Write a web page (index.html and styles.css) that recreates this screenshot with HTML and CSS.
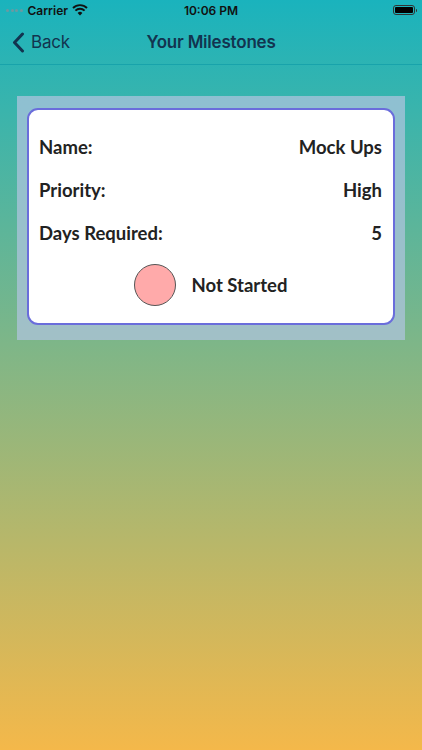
FILE: index.html
```html
<!DOCTYPE html>
<html lang="en">
<head>
    <meta charset="UTF-8">
    <title>Your Milestones</title>
    <link rel="stylesheet" href="styles.css">
</head>
<body>
    <div class="screen">
        <div class="status">
            <div class="status-left">
                <span class="dots"><i></i><i></i><i></i><i></i></span>
                <span class="carrier">Carrier</span>
                <svg class="wifi" width="16" height="12" viewBox="0 0 16 12">
                    <path d="M8 11.5 L5.6 8.9 A3.4 3.4 0 0 1 10.4 8.9 Z" fill="#111"/>
                    <path d="M3.4 6.6 A6.5 6.5 0 0 1 12.6 6.6" stroke="#111" stroke-width="1.9" fill="none"/>
                    <path d="M1 4 A10 10 0 0 1 15 4" stroke="#111" stroke-width="1.9" fill="none"/>
                </svg>
            </div>
            <div class="time">10:06 PM</div>
            <div class="battery"><span></span></div>
        </div>
        <div class="nav">
            <a href="#" class="back">
                <svg width="13" height="21" viewBox="0 0 13 21">
                    <path d="M10.5 2 L2.5 10.5 L10.5 19" stroke="#12344f" stroke-width="3" fill="none" stroke-linecap="round" stroke-linejoin="round"/>
                </svg>
                <span>Back</span>
            </a>
            <div class="title">Your Milestones</div>
        </div>

        <div class="panel">
            <div class="card">
                <div class="row"><span>Name:</span><span>Mock Ups</span></div>
                <div class="row"><span>Priority:</span><span>High</span></div>
                <div class="row"><span>Days Required:</span><span>5</span></div>
                <div class="state">
                    <div class="dot"></div>
                    <span>Not Started</span>
                </div>
            </div>
        </div>
    </div>
</body>
</html>
```

FILE: styles.css
```css
* {padding: 0; margin: 0; box-sizing: border-box;}
body {width: 422px; height: 750px; overflow: hidden; font-family: "Lato", "Noto Sans", sans-serif;}
.screen {height: 750px; background: linear-gradient(to bottom, #1ab3bd 0%, #7cb689 45%, #f4b84a 100%);}

.status {height: 20px; display: flex; align-items: center; justify-content: space-between; padding: 0 7px 0 6px;
    font-family: "Inter", "Liberation Sans", sans-serif; font-size: 12px; font-weight: 600; color: #111; position: relative;}
.status-left {display: flex; align-items: center; gap: 4px;}
.dots {display: flex; gap: 1.5px; margin-right: 1px;}
.dots i {display: block; width: 3px; height: 3px; border-radius: 50%; background: #6a9aa2;}
.time {position: absolute; left: 0; right: 0; text-align: center; pointer-events: none;}
.battery {width: 22px; height: 10px; border: 1px solid #333; border-radius: 3px; padding: 1px; position: relative;}
.battery span {display: block; height: 100%; background: #000; border-radius: 1px;}
.battery:after {content: ""; position: absolute; right: -3px; top: 2.5px; width: 1.5px; height: 3.5px; background: #333; border-radius: 0 1px 1px 0;}

.nav {height: 45px; display: flex; align-items: center; position: relative; border-bottom: 1px solid #18a3ab;
    font-family: "Inter", "Liberation Sans", sans-serif; color: #12344f; font-size: 17px;}
.back {display: flex; align-items: center; gap: 6px; padding-left: 12px; color: #12344f; text-decoration: none; letter-spacing: -0.2px;}
.title {position: absolute; left: 0; right: 0; text-align: center; font-weight: 600; pointer-events: none; letter-spacing: -0.2px;}

.panel {margin: 31px 17px 0; background: rgba(176, 196, 222, 0.73); padding: 12px 10px 15px;}
.card {background: #fff; border: 2px solid #6a6ddb; border-radius: 11px; padding: 25px 11px 17px 10px;
    display: flex; flex-direction: column; gap: 19px; color: #222; font-size: 18.5px; font-weight: 700;}
.row {display: flex; justify-content: space-between; line-height: 24px;}
.state {display: flex; align-items: center; justify-content: center; gap: 16px;}
.dot {width: 42px; height: 42px; border-radius: 50%; background: #ffaaaa; border: 1px solid #555;}
```
